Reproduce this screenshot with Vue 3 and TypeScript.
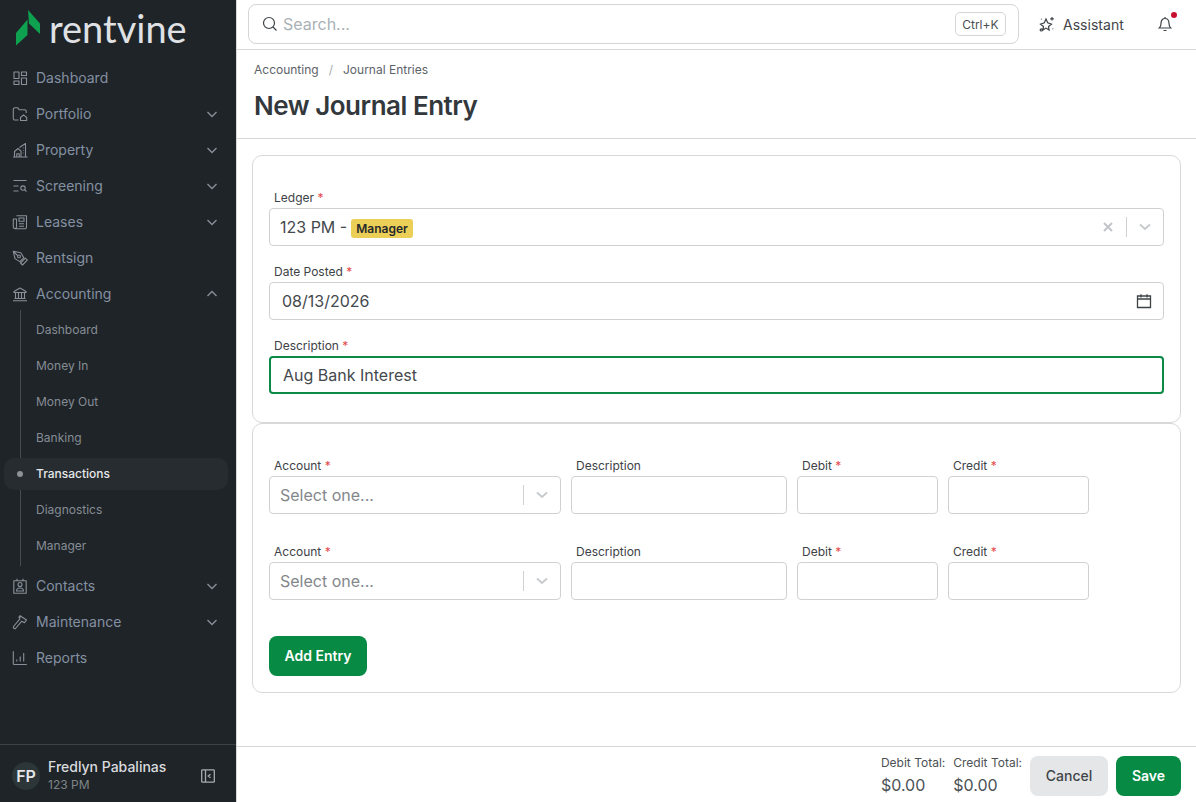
<script setup lang="ts">
interface NavItem { label: string; icon: string; caret?: 'down' | 'up' }
const topNav: NavItem[] = [
  { label: 'Dashboard', icon: 'dash' },
  { label: 'Portfolio', icon: 'folder', caret: 'down' },
  { label: 'Property', icon: 'prop', caret: 'down' },
  { label: 'Screening', icon: 'screen', caret: 'down' },
  { label: 'Leases', icon: 'lease', caret: 'down' },
  { label: 'Rentsign', icon: 'pen' },
  { label: 'Accounting', icon: 'bank', caret: 'up' },
]
const bottomNav: NavItem[] = [
  { label: 'Contacts', icon: 'contact', caret: 'down' },
  { label: 'Maintenance', icon: 'hammer', caret: 'down' },
  { label: 'Reports', icon: 'chart' },
]
const subNav = ['Dashboard', 'Money In', 'Money Out', 'Banking', 'Transactions', 'Diagnostics', 'Manager']
const icons: Record<string, string> = {
  dash: 'M2 2h5v6.500H2zM9.500 2h5v3.500h-5zM9.500 8h5v6.500h-5zM2 11h5v3.500H2z',
  folder: 'M6.500 14H2.800a1.500 1.500 0 0 1-1.500-1.500V3.300A1.500 1.500 0 0 1 2.800 1.800h3l1.500 2h5.400A1.500 1.500 0 0 1 14.200 5.300V7M8.500 11.500l3-2.600 3.200 2.600V14.500H8.500z',
  prop: 'M1 15h14.500M2.500 15V9.500L6 6.500l3 2.600V15M7.500 5.500L13.500 1.500V15M4.800 15v-3.200h2.400V15M10.800 6h.8M10.800 8.500h.8M10.800 11h.8',
  screen: 'M1.500 2.500h13M1.500 8h5M1.500 13h5M11 12.300a2.200 2.200 0 1 0 0-4.400 2.200 2.200 0 0 0 0 4.400zM12.700 11.800l1.800 1.700',
  lease: 'M4.500 1.800h10V13a1.800 1.800 0 0 1-1.800 1.800H3M4.500 5H1.300v8a1.600 1.600 0 0 0 3.200 0zM7 4h5v3.300H7zM7 9.800h5M7 12.200h5',
  pen: 'M1.300 1.300l7.500 1.500 3 4.800-4 4-4.800-3zM1.500 1.500l4.400 4.400M7 7.800a1.400 1.400 0 1 0 0-2.800 1.400 1.400 0 0 0 0 2.800zM8.500 13l4.800-4.800 2 2-4.800 4.800z',
  bank: 'M2 5.500L8 2l6 3.500v1H2zM3.500 6.800v5.700M6.500 6.800v5.700M9.500 6.800v5.700M12.500 6.800v5.700M2.500 12.500h11M1 14.800h14',
  contact: 'M1.800 2.800h12.400v12.400H1.800zM5 .8v2M11 .8v2M8 8.500a2 2 0 1 0 0-4 2 2 0 0 0 0 4zM4.500 13c0-2 1.500-3 3.500-3s3.500 1 3.500 3z',
  hammer: 'M8 1.800l6.500 4.200-2 2.700-2.700-1.500-6.300 7.300c-.8.700-2.800-.8-2-2l6.200-7.300zM6.700 3.800c.3-1.200 1-2 2.300-2',
  chart: 'M1.300 1.300v12.200a1 1 0 0 0 1 1h12.500M4.800 11.500V9.500M8.200 11.500V6.500M11.700 11.500V3',
}
</script>

<template>
  <div class="app">
    <aside class="side">
      <div class="brand">
        <svg class="mark" viewBox="0 0 26 36" width="26" height="36">
          <path fill="#0ea14f" d="M12 0L24 13.500V24L13 13.500z" />
          <path fill="#0ea14f" d="M0 23L11.500 9.500V25L0 35.500z" />
        </svg>
        <span class="word">rentvine</span>
      </div>
      <nav class="nav">
        <a v-for="n in topNav" :key="n.label" class="item">
          <svg class="ic" viewBox="0 0 16 16" width="16" height="16"><path :d="icons[n.icon]" /></svg>
          <span class="lbl">{{ n.label }}</span>
          <svg v-if="n.caret" class="caret" :class="{ up: n.caret === 'up' }" viewBox="0 0 12 12" width="12" height="12"><path d="M1.500 4l4.500 4.500L10.500 4" /></svg>
        </a>
        <div class="sub">
          <a v-for="s in subNav" :key="s" class="subitem" :class="{ active: s === 'Transactions' }">
            <i v-if="s === 'Transactions'" class="dot"></i>
            {{ s }}
          </a>
        </div>
        <a v-for="n in bottomNav" :key="n.label" class="item">
          <svg class="ic" viewBox="0 0 16 16" width="16" height="16"><path :d="icons[n.icon]" /></svg>
          <span class="lbl">{{ n.label }}</span>
          <svg v-if="n.caret" class="caret" viewBox="0 0 12 12" width="12" height="12"><path d="M1.500 4l4.500 4.500L10.500 4" /></svg>
        </a>
      </nav>
      <div class="user">
        <div class="avatar">FP</div>
        <div class="who">
          <div class="name">Fredlyn Pabalinas</div>
          <div class="org">123 PM</div>
        </div>
        <svg class="collapse" viewBox="0 0 14 14" width="14" height="14"><path d="M1.500.8h11a.8.8 0 0 1 .8.800v10.800a.8.8 0 0 1-.8.800h-11a.8.8 0 0 1-.8-.8V1.600a.8.8 0 0 1 .8-.8zM4.500.8v12.400M9.500 5.300L7.300 7l2.200 1.700" /></svg>
      </div>
    </aside>

    <main class="main">
      <header class="top">
        <div class="search">
          <svg viewBox="0 0 16 16" width="16" height="16" class="sic"><path d="M7 12.500a5.500 5.500 0 1 0 0-11 5.500 5.500 0 0 0 0 11zM11 11l3.500 3.500" /></svg>
          <span class="ph">Search...</span>
          <span class="kbd">Ctrl+K</span>
        </div>
        <div class="assistant">
          <svg viewBox="0 0 16 16" width="16" height="16" class="sic"><path d="M7 3l1.700 3.800 3.800 1.400-3 2.300.6 3.600-3.100-2-3.100 2 .6-3.600-3-2.300 3.800-1.400zM13 1v3.600M11.200 2.800h3.600M2.300 12.800a1.100 1.100 0 1 0 0 2.200 1.100 1.100 0 0 0 0-2.200zM2.500 2.800v.8M13.800 12.500v.8" /></svg>
          <span>Assistant</span>
        </div>
        <div class="bell">
          <svg viewBox="0 0 16 16" width="16" height="16" class="sic"><path d="M2.300 12h11.400c-1-1-1.700-2-1.700-4.500C12 4.500 10.500 2.500 8 2.500S4 4.500 4 7.500C4 10 3.300 11 2.300 12zM6.500 14.500h3M8 1v1.500" /></svg>
          <i class="red"></i>
        </div>
      </header>

      <section class="head">
        <div class="crumbs"><span>Accounting</span><span class="slash">/</span><span>Journal Entries</span></div>
        <h1>New Journal Entry</h1>
      </section>

      <div class="content">
        <div class="card one">
          <div class="field">
            <label>Ledger <b>*</b></label>
            <div class="ctl sel">
              <span class="val">123 PM - <em class="tag">Manager</em></span>
              <svg class="x" viewBox="0 0 12 12" width="12" height="12"><path d="M2 2l8 8M10 2l-8 8" /></svg>
              <i class="sep"></i>
              <svg class="chev" viewBox="0 0 14 14" width="14" height="14"><path d="M2 4.500l5 4.500 5-4.500" /></svg>
            </div>
          </div>
          <div class="field">
            <label>Date Posted <b>*</b></label>
            <div class="ctl date">
              <span class="val">08/13/2026</span>
              <svg class="cal" viewBox="0 0 16 16" width="16" height="16"><path d="M1.500 3h13v11.500h-13zM1.500 6h13M5 1.200v3.300M11 1.200v3.300" /></svg>
            </div>
          </div>
          <div class="field last">
            <label>Description <b>*</b></label>
            <div class="ctl focus"><span class="val">Aug Bank Interest</span></div>
          </div>
        </div>

        <div class="card two">
          <div v-for="r in 2" :key="r" class="row">
            <div class="cell">
              <label>Account <b>*</b></label>
              <div class="ctl sel">
                <span class="ph2">Select one...</span>
                <i class="sep"></i>
                <svg class="chev" viewBox="0 0 14 14" width="14" height="14"><path d="M2 4.500l5 4.500 5-4.500" /></svg>
              </div>
            </div>
            <div class="cell"><label>Description</label><div class="ctl"></div></div>
            <div class="cell"><label>Debit <b>*</b></label><div class="ctl"></div></div>
            <div class="cell"><label>Credit <b>*</b></label><div class="ctl"></div></div>
          </div>
          <button class="btn green add">Add Entry</button>
        </div>
      </div>

      <footer class="bar">
        <div class="tot"><span>Debit Total:</span><strong>$0.00</strong></div>
        <div class="tot"><span>Credit Total:</span><strong>$0.00</strong></div>
        <button class="btn grey">Cancel</button>
        <button class="btn green">Save</button>
      </footer>
    </main>
  </div>
</template>

<style>
html, body { margin: 0; overflow: hidden; }
</style>

<style scoped>
* { box-sizing: border-box; }
.app { display: flex; width: 1196px; height: 802px; font-family: Inter, "Liberation Sans", sans-serif; color: #33383c; background: #fff; overflow: hidden; }
.side { width: 236px; flex: none; background: #1f2428; display: flex; flex-direction: column; }
.brand { height: 60px; display: flex; align-items: flex-start; padding: 10px 0 0 16px; flex: none; }
.mark { display: block; }
.word { font-family: Lato, Inter, sans-serif; font-size: 38px; line-height: 38px; color: #dfe1e4; margin-left: 7px; font-weight: 400; margin-top: -1px; }
.nav { flex: 1; display: flex; flex-direction: column; }
.item { height: 36px; display: flex; align-items: center; padding: 0 18px 0 12px; color: #8491a3; font-size: 14px; line-height: 20px; flex: none; }
.ic { fill: none; stroke: #8a9099; stroke-width: 1.100; flex: none; stroke-linejoin: round; }
.lbl { margin-left: 8px; flex: 1; }
.caret { fill: none; stroke: #8a9099; stroke-width: 1.300; }
.caret.up { transform: scaleY(-1); }
.sub { margin: -2px 0 2px 20px; padding: 2px 0; border-left: 1px solid #464b50; width: 209px; display: flex; flex-direction: column; flex: none; }
.subitem { position: relative; height: 32px; margin: 2px 0 2px -17px; padding-left: 32px; display: flex; align-items: center; font-size: 12px; line-height: 16px; color: #858c95; width: 224px; border-radius: 10px; }
.subitem.active { background: #272c30; color: #e6e8ea; font-weight: 500; }
.dot { position: absolute; left: 13px; top: 13px; width: 6px; height: 6px; border-radius: 50%; background: #8d9297; }
.user { height: 58px; border-top: 1px solid #3c4145; display: flex; align-items: center; padding: 4px 21px 0 12px; flex: none; }
.avatar { width: 28px; height: 28px; border-radius: 50%; background: #2c3538; color: #e4e6e8; font-size: 16px; font-weight: 600; display: flex; align-items: center; justify-content: center; }
.who { margin-left: 8px; flex: 1; }
.name { font-size: 14px; font-weight: 500; color: #d9dbde; line-height: 18px; }
.org { font-size: 12px; color: #7f8489; line-height: 16px; margin-top: 1px; }
.collapse { fill: none; stroke: #a8acb0; stroke-width: 1.300; }

.main { flex: 1; min-width: 0; display: flex; flex-direction: column; border-left: 1px solid #d6d8da; }
.top { height: 50px; flex: none; border-bottom: 1px solid #d6d8da; display: flex; align-items: flex-start; padding: 4px 0 0 11px; }
.search { width: 771px; height: 40px; border: 1px solid #d3d6d9; border-radius: 8px; display: flex; align-items: center; padding: 0 12px 0 13px; }
.sic { fill: none; stroke: #3d4246; stroke-width: 1.200; flex: none; }
.ph { margin-left: 5px; flex: 1; font-size: 16px; color: #a9b1b5; }
.kbd { border: 1px solid #d3d6d9; border-radius: 5px; height: 24px; padding: 0 6.500px; font-size: 12px; color: #4a4f54; display: flex; align-items: center; }
.assistant { display: flex; align-items: center; margin-left: 20px; height: 40px; font-size: 14px; color: #3f4448; letter-spacing: .03px; }
.assistant span { margin-left: 8px; font-weight: 400; }
.bell { position: relative; margin-left: 33px; height: 40px; display: flex; align-items: center; }
.red { position: absolute; right: -4px; top: 8px; width: 6px; height: 6px; border-radius: 50%; background: #c8102e; }

.head { height: 89px; flex: none; border-bottom: 1px solid #d6d8da; padding: 12px 0 0 17px; }
.crumbs { font-size: 12px; line-height: 16px; color: #5d6368; display: flex; }
.slash { margin: 0 10px; color: #a6abb0; }
h1 { margin: 10px 0 0; font-size: 26px; line-height: 36px; font-weight: 600; letter-spacing: -.48px; color: #33383c; }

.content { flex: 1; padding: 16px 15px 0 15px; }
.card { border: 1px solid #d6d8da; border-radius: 10px; padding-left: 16px; padding-right: 16px; }
.one { height: 268px; padding-top: 32px; }
.two { height: 270px; padding-top: 32px; }
.field { margin-bottom: 16px; }
.field.last { margin-bottom: 0; }
label { display: block; height: 20px; font-size: 12px; line-height: 20px; padding-left: 5px; color: #3d4246; }
label b { color: #e5484d; font-weight: 400; }
.ctl { height: 38px; border: 1px solid #cfd2d5; border-radius: 4px; display: flex; align-items: center; background: #fff; }
.val { font-size: 16px; color: #44494d; }
.sel { padding: 0 0 0 10px; }
.sel .val, .ph2 { flex: 1; }
.ph2 { font-size: 16px; color: #83878b; }
.tag { font-style: normal; font-size: 12px; font-weight: 600; background: #eccf56; color: #26292c; padding: 2px 5.500px; border-radius: 3px; margin-left: -1px; position: relative; top: -0.500px; }
.x { fill: none; stroke: #c2c5c8; stroke-width: 2; margin-right: 12px; }
.sep { width: 1px; height: 20px; background: #cfd2d5; flex: none; }
.chev { fill: none; stroke: #c8cbce; stroke-width: 2; margin: 0 11px; flex: none; }
.date { padding: 0 11px 0 12px; }
.date .val { flex: 1; }
.cal { fill: none; stroke: #3d4246; stroke-width: 1.300; }
.focus { border: 2px solid #0a8a45; padding-left: 12px; }
.row { display: grid; grid-template-columns: 292px 216px 141px 141px; gap: 10px; height: 86px; }
.row label { height: 20px; }
.add { width: 98px; height: 40px; margin-top: 8px; padding-bottom: 2px; }
.btn { border: 0; border-radius: 8px; font-family: inherit; font-size: 14px; font-weight: 600; display: block; }
.green { background: #078a43; color: #fff; }
.grey { background: #e4e6e7; color: #3f4448; font-weight: 500; }

.bar { height: 56px; flex: none; border-top: 1px solid #d6d8da; display: flex; align-items: center; justify-content: flex-end; padding: 2px 15px 0 0; }
.bar .btn { height: 40px; }
.bar .grey { width: 78px; margin-left: 8px; }
.bar .green { width: 65px; margin-left: 8px; }
.tot { display: flex; flex-direction: column; margin-left: 8px; }
.tot span { font-size: 12px; line-height: 16px; color: #4c5156; }
.tot strong { font-size: 16px; font-weight: 400; line-height: 22px; margin-top: 3px; color: #4c5156; }
</style>
